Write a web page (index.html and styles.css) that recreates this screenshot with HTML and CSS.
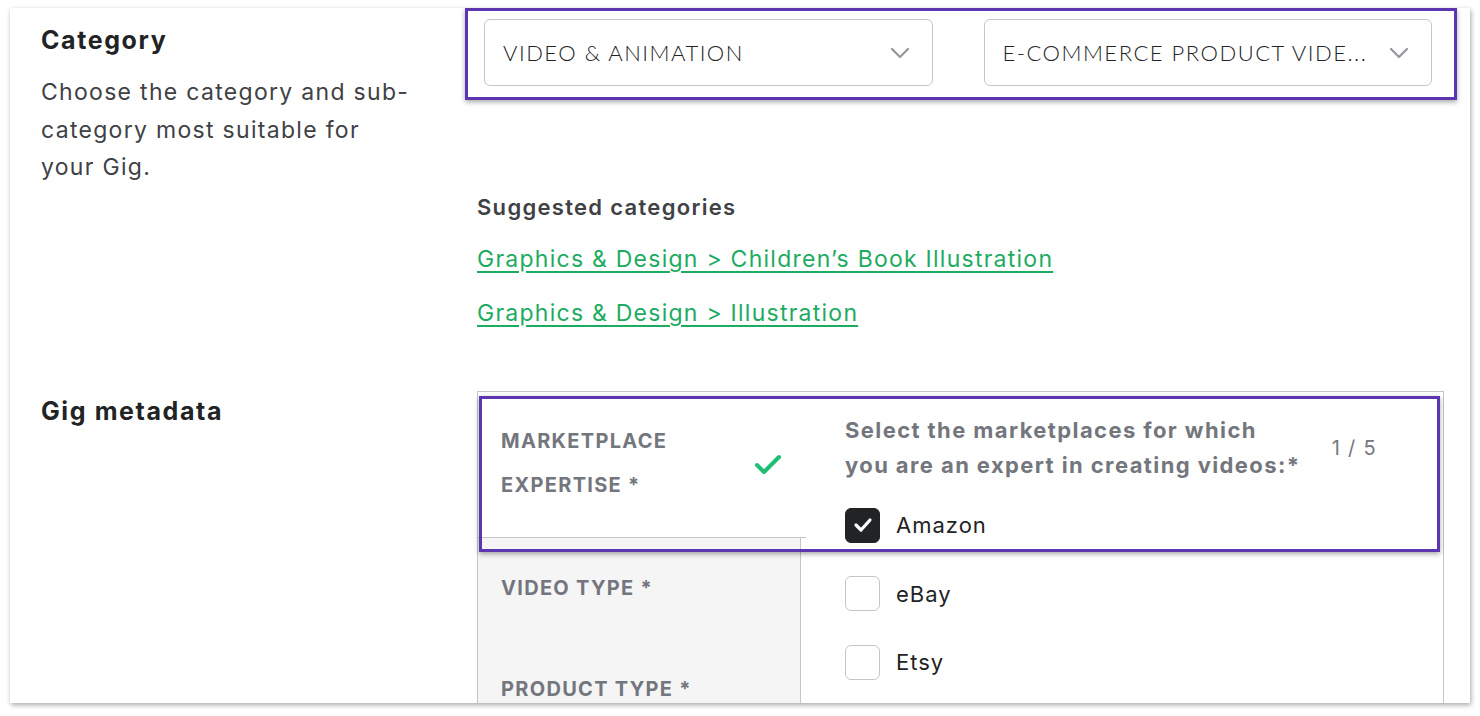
FILE: index.html
```html
<!DOCTYPE html>
<html lang="en">
<head>
    <meta charset="UTF-8">
    <meta name="viewport" content="width=device-width, initial-scale=1.0">
    <title>Gig Overview</title>
    <link rel="stylesheet" href="styles.css">
</head>
<body>
    <div class="card">
        <section class="form-row">
            <div class="row-info">
                <h2>Category</h2>
                <p>Choose the category and sub-category most suitable for your Gig.</p>
            </div>
            <div class="row-body">
                <div class="select-group">
                    <div class="select">
                        <span>VIDEO &amp; ANIMATION</span>
                        <svg width="20" height="12" viewBox="0 0 20 12"><polyline points="2,2 10,10 18,2" fill="none" stroke="#95979d" stroke-width="2.2" stroke-linecap="round" stroke-linejoin="round"/></svg>
                    </div>
                    <div class="select">
                        <span>E-COMMERCE PRODUCT VIDE...</span>
                        <svg width="20" height="12" viewBox="0 0 20 12"><polyline points="2,2 10,10 18,2" fill="none" stroke="#95979d" stroke-width="2.2" stroke-linecap="round" stroke-linejoin="round"/></svg>
                    </div>
                </div>
                <div class="suggested">
                    <h3>Suggested categories</h3>
                    <a href="#">Graphics &amp; Design &gt; Children’s Book Illustration</a>
                    <a href="#">Graphics &amp; Design &gt; Illustration</a>
                </div>
            </div>
        </section>

        <section class="form-row metadata-row">
            <div class="row-info">
                <h2>Gig metadata</h2>
            </div>
            <div class="row-body">
                <div class="metadata">
                    <ul class="meta-tabs">
                        <li class="active">
                            <span>MARKETPLACE<br>EXPERTISE *</span>
                            <svg width="28" height="24" viewBox="0 0 28 24"><path d="M3 12 L10 19 L25 4" fill="none" stroke="#1dbf73" stroke-width="4" stroke-linecap="round" stroke-linejoin="round"/></svg>
                        </li>
                        <li><span>VIDEO TYPE *</span></li>
                        <li><span>PRODUCT TYPE *</span></li>
                    </ul>
                    <div class="meta-panel">
                        <div class="panel-head">
                            <p>Select the marketplaces for which<br>you are an expert in creating videos:*</p>
                            <span class="counter">1 / 5</span>
                        </div>
                        <ul class="options">
                            <li>
                                <span class="checkbox checked">
                                    <svg width="20" height="16" viewBox="0 0 20 16"><path d="M3 8 L8 13 L17 3" fill="none" stroke="#fff" stroke-width="3.2" stroke-linecap="round" stroke-linejoin="round"/></svg>
                                </span>
                                Amazon
                            </li>
                            <li><span class="checkbox"></span>eBay</li>
                            <li><span class="checkbox"></span>Etsy</li>
                        </ul>
                    </div>
                    <div class="highlight-box"></div>
                </div>
            </div>
        </section>
    </div>
</body>
</html>
```

FILE: styles.css
```css
body {
    margin: 0;
    padding: 0;
    background-color: #fff;
    font-family: Inter, "Open Sans", sans-serif;
    letter-spacing: 1.3px;
    color: #404145;
}
.card {
    margin: 8px 10px;
    width: 1460px;
    height: 695px;
    overflow: hidden;
    background: #fff;
    box-shadow: 1px 2px 5px rgba(0, 0, 0, 0.35);
    box-sizing: border-box;
    padding: 0 13px 0 31px;
}
.form-row {
    display: grid;
    grid-template-columns: 436px 1fr;
}
.row-info h2 {
    margin: 16px 0 0;
    font-size: 25px;
    line-height: 32px;
    font-weight: 700;
    letter-spacing: 1.6px;
    color: #222325;
}
.row-info p {
    margin: 18px 0 0;
    width: 378px;
    font-size: 23px;
    line-height: 37.5px;
    color: #404145;
}
.select-group {
    display: flex;
    gap: 51px;
    margin-left: -12px;
    padding: 8px 22px 11px 16px;
    border: 3px solid #5b36b0;
    box-shadow: 0 2px 5px rgba(0, 0, 0, 0.35);
}
.select {
    flex: 1;
    height: 67px;
    box-sizing: border-box;
    border: 1px solid #c5c6c9;
    border-radius: 6px;
    display: flex;
    align-items: center;
    justify-content: space-between;
    padding: 0 22px 0 18px;
    font-family: Lato, Inter, sans-serif;
    font-size: 22px;
    font-weight: 300;
    letter-spacing: 1.5px;
    color: #222325;
}
.suggested {
    display: flex;
    flex-direction: column;
    align-items: flex-start;
    gap: 20px;
    margin-top: 92px;
}
.suggested h3 {
    margin: 0;
    font-size: 22px;
    line-height: 30px;
    font-weight: 600;
    color: #404145;
}
.suggested a {
    font-size: 23px;
    line-height: 34px;
    letter-spacing: 1.25px;
    color: #1dab62;
    text-decoration: underline;
    text-underline-offset: 4px;
}
.metadata-row {
    margin-top: 61px;
}
.metadata-row .row-info h2 {
    margin-top: 4px;
}
.metadata {
    position: relative;
    display: flex;
    width: 965px;
    height: 400px;
    border: 1px solid #c5c6c9;
    border-bottom: none;
}
.meta-tabs {
    list-style: none;
    margin: 0;
    padding: 0;
    width: 323px;
    flex-shrink: 0;
}
.meta-tabs li {
    display: flex;
    align-items: center;
    justify-content: space-between;
    height: 101px;
    box-sizing: border-box;
    padding: 0 19px 2px 23px;
    background-color: #f5f5f5;
    border-right: 1px solid #c5c6c9;
    font-size: 20px;
    line-height: 44px;
    font-weight: 700;
    color: #74767e;
}
.meta-tabs li.active {
    height: 146px;
    background-color: #fff;
    border-right: none;
    border-bottom: 1px solid #c5c6c9;
    margin-right: -5px;
    padding: 0 24px 0 23px;
}
.meta-tabs li.active span {
    margin-top: -3px;
}
.meta-panel {
    flex: 1;
    padding: 21px 66px 0 44px;
}
.panel-head {
    display: flex;
    align-items: center;
    justify-content: space-between;
}
.panel-head p {
    margin: 0;
    font-size: 22px;
    line-height: 35px;
    font-weight: 700;
    letter-spacing: 1.4px;
    color: #74767e;
}
.counter {
    font-size: 20px;
    color: #74767e;
}
.options {
    list-style: none;
    margin: 8px 0 0;
    padding: 0;
}
.options li {
    display: flex;
    align-items: center;
    gap: 16px;
    height: 68.5px;
    font-size: 22px;
    letter-spacing: 1px;
    color: #222325;
}
.checkbox {
    width: 35px;
    height: 35px;
    box-sizing: border-box;
    border: 1px solid #c5c6c9;
    border-radius: 6px;
    display: flex;
    align-items: center;
    justify-content: center;
}
.checkbox.checked {
    background-color: #222325;
    border-color: #222325;
}
.highlight-box {
    position: absolute;
    left: 1px;
    top: 4px;
    width: 961px;
    height: 156px;
    box-sizing: border-box;
    border: 3px solid #5b36b0;
    box-shadow: 0 2px 5px rgba(0, 0, 0, 0.35);
    pointer-events: none;
}
```
